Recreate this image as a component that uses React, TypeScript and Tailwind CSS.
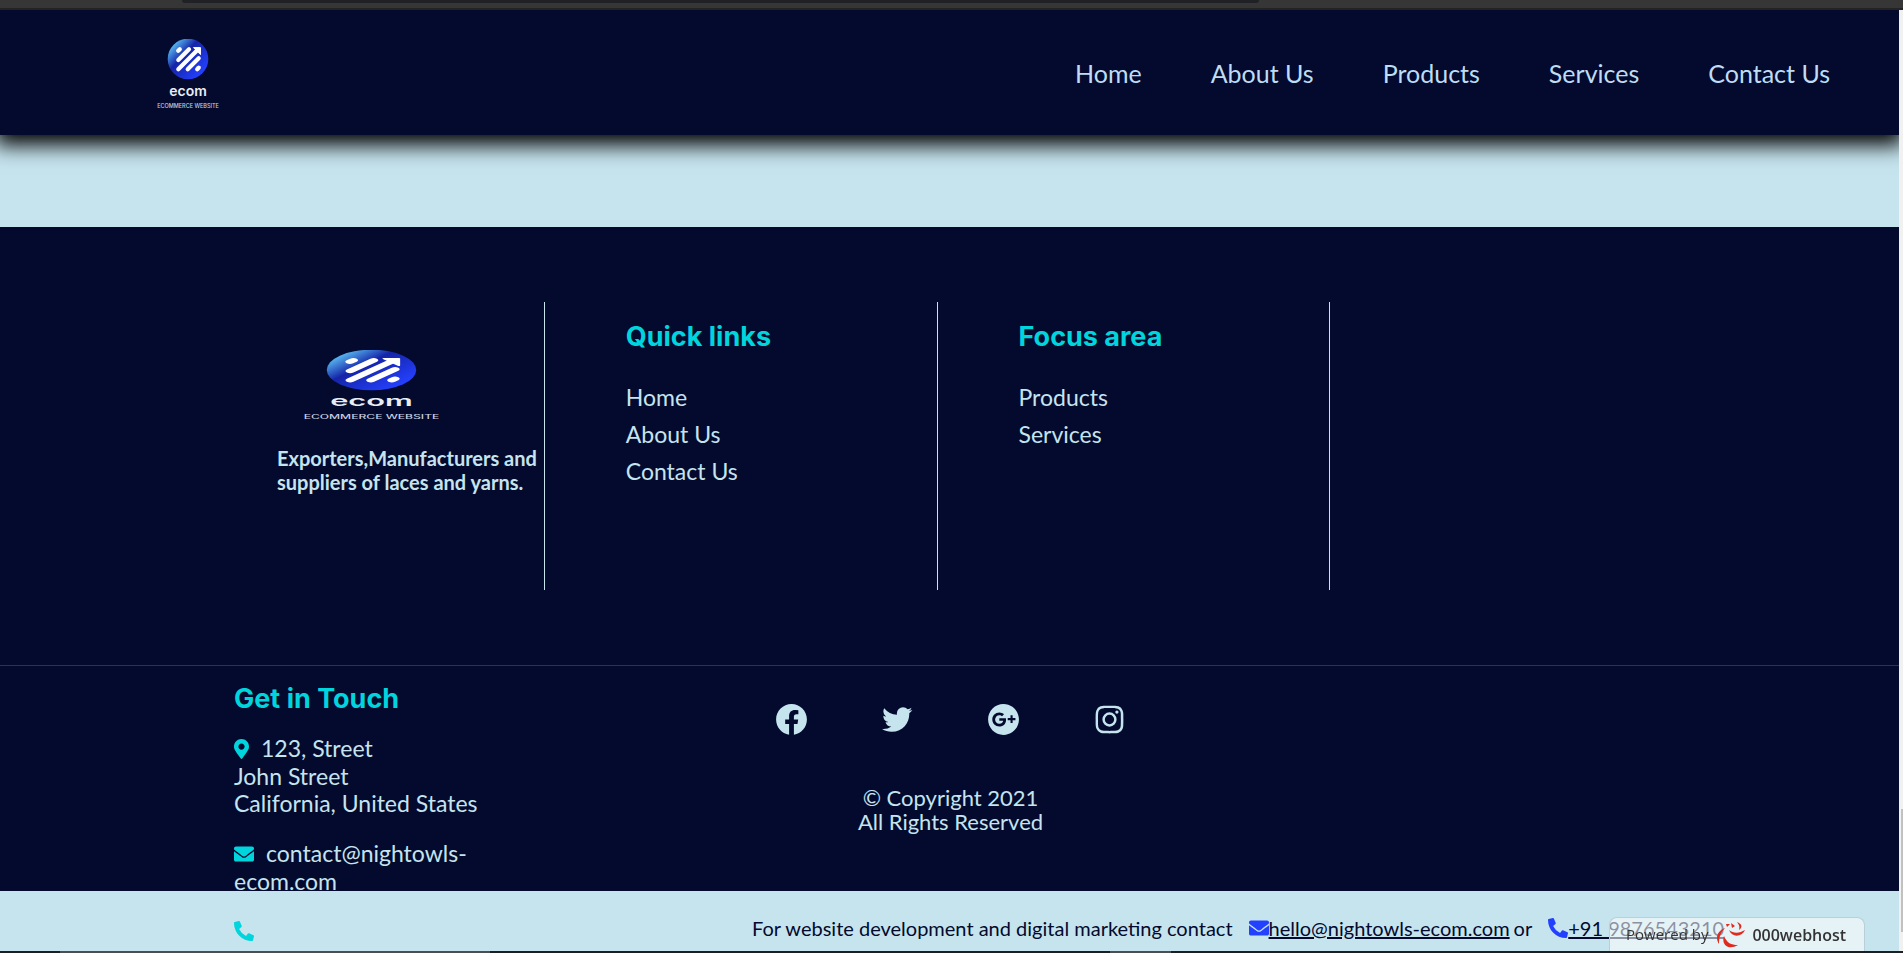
import { BiLogoFacebookCircle, BiLogoTwitter, BiLogoGooglePlusCircle, BiLogoInstagram } from "react-icons/bi";
import { FaEnvelope, FaMapMarkerAlt, FaPhoneAlt } from "react-icons/fa";

const navItems = ["Home", "About Us", "Products", "Services", "Contact Us"];
const quickLinks = ["Home", "About Us", "Contact Us"];
const focusLinks = ["Products", "Services"];
const socials = [
  { label: "Facebook", Icon: BiLogoFacebookCircle },
  { label: "Twitter", Icon: BiLogoTwitter },
  { label: "Google Plus", Icon: BiLogoGooglePlusCircle },
  { label: "Instagram", Icon: BiLogoInstagram },
];

function Logo({ id, className }: { id: string; className: string }) {
  return (
    <svg viewBox="0 0 64 70" preserveAspectRatio="none" className={className} role="img" aria-label="ecom ecommerce website">
      <defs>
        <linearGradient id={id} x1="0.1" y1="0.15" x2="0.85" y2="0.85">
          <stop offset="0" stopColor="#5cc0f5" />
          <stop offset="0.38" stopColor="#1524a8" />
          <stop offset="1" stopColor="#2440ff" />
        </linearGradient>
      </defs>
      <circle cx="32" cy="20" r="20.3" fill={`url(#${id})`} />
      <g stroke="#fff" strokeWidth="4.2" strokeLinecap="round" fill="none">
        <path d="M22.2 11.8 L23.8 10.2" />
        <path d="M22.3 21 L33 10.3" />
        <path d="M22.3 30.3 L41 11.6" />
        <path d="M31.7 30.3 L42.7 19.3" />
        <path d="M41.2 30.3 L42.7 28.8" />
      </g>
      <path d="M37.5 8.6 H44.5 V15.6 Z" fill="#fff" stroke="#fff" strokeWidth="1" strokeLinejoin="round" />
      <text x="32" y="56.5" textAnchor="middle" fontSize="14" className="fill-[#e8edf5] font-['Inter',sans-serif] font-semibold">ecom</text>
      <text x="32" y="69" textAnchor="middle" fontSize="5.5" className="fill-[#c9cfe0] font-['Inter',sans-serif] font-medium">ECOMMERCE WEBSITE</text>
    </svg>
  );
}

function LinkColumn({ title, links }: { title: string; links: string[] }) {
  return (
    <div className="h-72 border-r border-[#c6e4ee] pl-[81px] pt-[17px]">
      <h2 className="font-['Inter',sans-serif] text-[27px] leading-9 font-bold text-[#00d4dd]">{title}</h2>
      <ul className="mt-6 text-[23px] leading-[37px]">
        {links.map((l) => (
          <li key={l}><a href="#">{l}</a></li>
        ))}
      </ul>
    </div>
  );
}

export default function App() {
  return (
    <div className="flex min-h-screen flex-col bg-[#363636] font-['Lato',sans-serif] text-[#c6e4ee]">
      <div className="h-2.5 border-b-2 border-[#232323]">
        <div className="ml-[182px] mr-[644px] h-[3px] rounded-b-lg bg-[#202124]" />
      </div>
      <div className="flex flex-1">
        <div className="flex min-w-0 flex-1 flex-col overflow-hidden bg-[#c6e4ee]">
          <header className="flex h-[125px] items-center justify-between bg-[#030a2e] pl-[156px] pr-[69px] pt-0.5 shadow-[0_5px_20px_5px_#000]">
            <Logo id="mark-top" className="h-[70px] w-16" />
            <nav className="flex gap-[69px] text-[25px] text-[#bfdcf5]">
              {navItems.map((n) => (
                <a key={n} href="#">{n}</a>
              ))}
            </nav>
          </header>

          <footer className="mt-[92px]">
            <div className="bg-[#030a2e]">
              <div className="grid grid-cols-4 pb-[75px] pl-[152px] pr-[176px] pt-[75px]">
                <div className="h-72 border-r border-[#c6e4ee] pl-[125px] pt-12">
                  <Logo id="mark-footer" className="ml-6 h-[70px] w-[141px]" />
                  <p className="mt-[26px] text-xl leading-6 font-bold whitespace-nowrap">
                    Exporters,Manufacturers and
                    <br />
                    suppliers of laces and yarns.
                  </p>
                </div>
                <LinkColumn title="Quick links" links={quickLinks} />
                <LinkColumn title="Focus area" links={focusLinks} />
              </div>
              <div className="grid h-[226px] grid-cols-3 border-t border-[#2b3355]">
                <div className="pl-[234px] pt-[15px]">
                  <h2 className="font-['Inter',sans-serif] text-[27px] leading-9 font-bold text-[#00d4dd]">Get in Touch</h2>
                  <address className="mt-[18px] text-[23px] leading-[27px] whitespace-nowrap not-italic">
                    <FaMapMarkerAlt className="mr-3 mb-1 inline h-5 w-[15px] text-[#00d4dd]" />
                    123, Street
                    <br />
                    John Street
                    <br />
                    California, United States
                  </address>
                  <p className="mt-[23px] text-[23px] leading-[27px]">
                    <FaEnvelope className="mr-3 mb-1 inline size-5 text-[#00d4dd]" />
                    contact@nightowls-
                    <br />
                    ecom.com
                  </p>
                  <a href="#" aria-label="Phone" className="mt-[26px] block text-[#00d4dd]">
                    <FaPhoneAlt className="size-5" />
                  </a>
                </div>
                <div className="flex flex-col items-center pl-0.5 pt-[35px]">
                  <div className="flex gap-[69px]">
                    {socials.map(({ label, Icon }) => (
                      <a key={label} href="#" aria-label={label}><Icon className="size-[37px]" /></a>
                    ))}
                  </div>
                  <p className="mt-12 text-center text-[22px] leading-6">
                    © Copyright 2021
                    <br />
                    All Rights Reserved
                  </p>
                </div>
              </div>
            </div>
            <p className="flex h-[60px] items-center pl-[752px] pt-3.5 text-xl whitespace-nowrap text-[#030a2e]">
              For website development and digital marketing contact
              <FaEnvelope className="ml-4 size-5 text-[#2440ff]" />
              <a href="#" className="underline">hello@nightowls-ecom.com</a>
              <span className="ml-1">or</span>
              <FaPhoneAlt className="ml-4 size-5 text-[#2440ff]" />
              <a href="#" className="underline">+91 9876543210</a>
            </p>
          </footer>
        </div>
        <div className="flex w-1 flex-col bg-[#f1f1f1] pl-0.5 pt-[799px]">
          <div className="h-[123px] bg-[#c1c1c1]" />
        </div>
      </div>
      <div className="flex h-0.5 bg-[#1c1f22]">
        <div className="ml-[60px] w-[430px] bg-[#4c4f52]" />
        <div className="ml-[620px] w-[61px] bg-[#4c4f52]" />
      </div>

      <a
        href="#"
        className="fixed right-[38px] bottom-0.5 flex h-[34px] w-[256px] items-center rounded-t-lg border border-b-0 border-[#b9d0d9] bg-white/55 pl-4 font-['Open_Sans',sans-serif] text-[15px] font-medium text-[#333]"
      >
        Powered by
        <svg viewBox="0 0 30 26" className="ml-2 h-[26px] w-[30px]" aria-hidden="true">
          <g fill="#e02a1d">
            <path d="M9 6 C1 9 -1 16 3 22 C3 16 4 11 9 6Z" />
            <path d="M8 14 C5 22 12 29 22 23 C15 23 11 21 8 14Z" />
            <path d="M13 8 C16 16 26 15 29 8 C24 11 18 12 13 8Z" />
            <path d="M21 0 C26 2 27 5 23 8 C24 4 23 3 21 0Z" />
            <path d="M15 1 L19 4 L16 6Z M10 2 L14 2 L11 5Z" />
          </g>
        </svg>
        <span className="ml-1.5 text-base font-semibold">000webhost</span>
      </a>
    </div>
  );
}
